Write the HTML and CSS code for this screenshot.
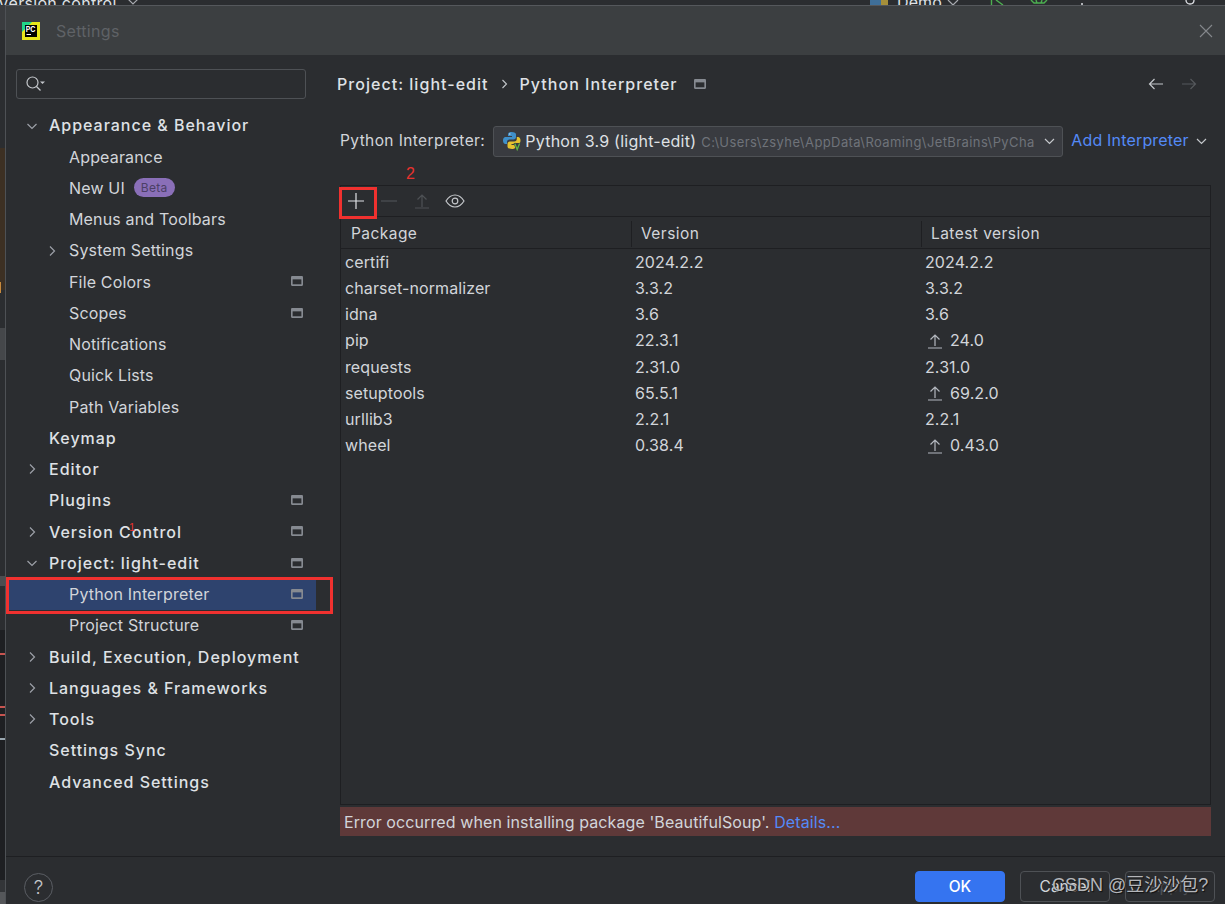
FILE: index.html
```html
<!DOCTYPE html>
<html lang="en">
<head>
<meta charset="utf-8">
<title>Settings</title>
<link rel="stylesheet" href="styles.css">
</head>
<body>
<div class="desktop">
  <div class="bg-top">
    <span class="bg-vc">Version control</span>
    <svg class="bg-chev-vc" width="12" height="8" viewBox="0 0 12 8"><path d="M1 1l5 5 5-5" fill="none" stroke="#a8abb0" stroke-width="1.2"/></svg>
    <svg class="bg-py" width="18" height="5" viewBox="0 0 18 5"><rect width="11" height="5" fill="#3f6f99"/><rect x="11" width="7" height="5" fill="#a58f3a"/></svg>
    <span class="bg-demo">Demo</span>
    <svg class="bg-chev-demo" width="12" height="8" viewBox="0 0 12 8"><path d="M1 1l5 5 5-5" fill="none" stroke="#a8abb0" stroke-width="1.2"/></svg>
    <svg class="bg-play" width="16" height="5" viewBox="0 0 16 5"><path d="M1.500 0v5M6 0l7 5" fill="none" stroke="#4caf50" stroke-width="1.400"/></svg>
    <svg class="bg-bug" width="18" height="5" viewBox="0 0 18 5"><path d="M1 0l3 3h10l3-3M6 0l1 3M12 0l-1 3" fill="none" stroke="#4caf50" stroke-width="1.400"/></svg>
    <i class="bg-dot"></i>
    <svg class="bg-ring" width="10" height="5" viewBox="0 0 10 5"><path d="M1 0c0 3 2 4 4 4s4-1 4-4" fill="none" stroke="#dfe1e5" stroke-width="1.300"/></svg>
  </div>
  <div class="bg-left">
    <i class="s s1"></i><i class="s s2"></i><i class="s s2b"></i><i class="s s3"></i><i class="s s3b"></i><i class="s s4"></i><i class="s s4a"></i><i class="s s4b"></i><i class="s s4c"></i><i class="s s4d"></i><i class="s s5"></i><i class="s s6"></i>
  </div>

  <main class="dialog">
    <header class="titlebar">
      <svg class="logo" width="18" height="18" viewBox="0 0 18 18">
        <rect width="18" height="18" fill="#e8e61a"/>
        <path d="M0 0h10L0 10z" fill="#21d789"/>
        <rect x="3" y="3" width="12" height="12" fill="#000"/>
        <text x="3.800" y="9.500" class="logo-text">PC</text>
        <rect x="4.500" y="12" width="4.500" height="1" fill="#fff"/>
      </svg>
      <span class="title">Settings</span>
      <svg class="close" width="14" height="14" viewBox="0 0 14 14"><path d="M1 1l12 12M13 1L1 13" stroke="#85888c" stroke-width="1.1" fill="none"/></svg>
    </header>

    <div class="content">
      <nav class="sidebar">
        <div class="search">
          <svg width="22" height="18" viewBox="0 0 22 18"><circle cx="7.500" cy="7.500" r="5.500" fill="none" stroke="#c4c7cb" stroke-width="1.2"/><path d="M11.500 11.500l4 4" stroke="#c4c7cb" stroke-width="1.2"/><path d="M15 6.500h5l-2.500 2.500z" fill="#c4c7cb"/></svg>
        </div>
        <ul class="tree">
          <li class="row top"><svg class="arrow" viewBox="0 0 12 12"><path d="M1.500 4l4.500 4.500L10.500 4"/></svg>Appearance &amp; Behavior</li>
          <li class="row sub">Appearance</li>
          <li class="row sub">New UI<span class="beta">Beta</span></li>
          <li class="row sub">Menus and Toolbars</li>
          <li class="row sub"><svg class="arrow" viewBox="0 0 12 12"><path d="M4 1.500l4.500 4.500L4 10.500"/></svg>System Settings</li>
          <li class="row sub">File Colors<svg class="pin" viewBox="0 0 11 9"><rect width="11" height="9" rx="1"/><rect class="pin-in" x="1.500" y="3" width="8" height="4.500"/></svg></li>
          <li class="row sub">Scopes<svg class="pin" viewBox="0 0 11 9"><rect width="11" height="9" rx="1"/><rect class="pin-in" x="1.500" y="3" width="8" height="4.500"/></svg></li>
          <li class="row sub">Notifications</li>
          <li class="row sub">Quick Lists</li>
          <li class="row sub">Path Variables</li>
          <li class="row top">Keymap</li>
          <li class="row top"><svg class="arrow" viewBox="0 0 12 12"><path d="M4 1.500l4.500 4.500L4 10.500"/></svg>Editor</li>
          <li class="row top">Plugins<svg class="pin" viewBox="0 0 11 9"><rect width="11" height="9" rx="1"/><rect class="pin-in" x="1.500" y="3" width="8" height="4.500"/></svg></li>
          <li class="row top"><svg class="arrow" viewBox="0 0 12 12"><path d="M4 1.500l4.500 4.500L4 10.500"/></svg>Version Control<svg class="pin" viewBox="0 0 11 9"><rect width="11" height="9" rx="1"/><rect class="pin-in" x="1.500" y="3" width="8" height="4.500"/></svg></li>
          <li class="row top"><svg class="arrow" viewBox="0 0 12 12"><path d="M1.500 4l4.500 4.500L10.500 4"/></svg>Project: light-edit<svg class="pin" viewBox="0 0 11 9"><rect width="11" height="9" rx="1"/><rect class="pin-in" x="1.500" y="3" width="8" height="4.500"/></svg></li>
          <li class="row sub selected">Python Interpreter<svg class="pin" viewBox="0 0 11 9"><rect width="11" height="9" rx="1"/><rect class="pin-in sel" x="1.500" y="3" width="8" height="4.500"/></svg></li>
          <li class="row sub">Project Structure<svg class="pin" viewBox="0 0 11 9"><rect width="11" height="9" rx="1"/><rect class="pin-in" x="1.500" y="3" width="8" height="4.500"/></svg></li>
          <li class="row top"><svg class="arrow" viewBox="0 0 12 12"><path d="M4 1.500l4.500 4.500L4 10.500"/></svg>Build, Execution, Deployment</li>
          <li class="row top"><svg class="arrow" viewBox="0 0 12 12"><path d="M4 1.500l4.500 4.500L4 10.500"/></svg>Languages &amp; Frameworks</li>
          <li class="row top"><svg class="arrow" viewBox="0 0 12 12"><path d="M4 1.500l4.500 4.500L4 10.500"/></svg>Tools</li>
          <li class="row top">Settings Sync</li>
          <li class="row top">Advanced Settings</li>
        </ul>
      </nav>

      <section class="panel">
        <div class="crumbs">
          <span>Project: light-edit</span>
          <svg class="crumb-sep" width="7" height="10" viewBox="0 0 7 10"><path d="M1.500 1l4 4-4 4" fill="none" stroke="#c4c7cb" stroke-width="1.100"/></svg>
          <span>Python Interpreter</span>
          <svg class="pin crumb-pin" viewBox="0 0 11 9"><rect width="11" height="9" rx="1"/><rect class="pin-in" x="1.500" y="3" width="8" height="4.500"/></svg>
          <svg class="nav-arrow" width="16" height="12" viewBox="0 0 16 12"><path d="M15 6H1.500M6.500 1l-5 5 5 5" fill="none" stroke="#c4c7cb" stroke-width="1.200"/></svg>
          <svg class="nav-arrow fwd" width="16" height="12" viewBox="0 0 16 12"><path d="M1 6h13.500M9.500 1l5 5-5 5" fill="none" stroke="#55585c" stroke-width="1.200"/></svg>
        </div>

        <div class="interp">
          <span class="interp-label">Python Interpreter:</span>
          <div class="combo">
            <svg class="py" width="20" height="20" viewBox="0 0 20 20">
              <path d="M9.500 1C6.500 1 6 2.200 6 3.500V5h4v1H3.500C2 6 1 7.300 1 9.500S2 13 3.500 13H5v-2c0-1.500 1-2.500 2.500-2.500h4C13 8.500 14 7.500 14 6V3.500C14 2 12.500 1 9.500 1z" fill="#3f8fc9"/>
              <path d="M10 18c3 0 3.500-1.200 3.500-2.500V14h-4v-1H16c1.500 0 2.500-1.300 2.500-3.500S17.500 6 16 6h-1.200v2c0 1.500-1 2.500-2.500 2.500H8C6.500 10.500 5.500 11.500 5.500 13v2.500C5.500 17 7 18 10 18z" fill="#e5c22f"/>
              <path d="M12.500 12l2.700 7 2.800-7" fill="#393b40" stroke="#393b40" stroke-width="2"/>
              <path d="M12.800 12.500l2.400 6 2.400-6" fill="none" stroke="#62b543" stroke-width="1.300"/>
              <circle cx="7.800" cy="3" r=".7" fill="#dfe1e5"/>
            </svg>
            <span class="combo-name">Python 3.9 (light-edit)</span>
            <span class="combo-path">C:\Users\zsyhe\AppData\Roaming\JetBrains\PyCha</span>
            <svg class="chev" width="11" height="7" viewBox="0 0 11 7"><path d="M1 1l4.500 4.500L10 1" fill="none" stroke="#c4c7cb" stroke-width="1.200"/></svg>
          </div>
          <span class="add">Add Interpreter</span>
          <svg class="chev add-chev" width="11" height="7" viewBox="0 0 11 7"><path d="M1 1l4.500 4.500L10 1" fill="none" stroke="#c4c7cb" stroke-width="1.200"/></svg>
        </div>

        <div class="table">
          <div class="toolbar">
            <svg width="16" height="16" viewBox="0 0 16 16"><path d="M8 0v16M0 8h16" stroke="#dfe1e5" stroke-width="1.200"/></svg>
            <svg width="16" height="16" viewBox="0 0 16 16"><path d="M0 8h16" stroke="#4e5155" stroke-width="1.200"/></svg>
            <svg width="16" height="16" viewBox="0 0 16 16"><path d="M8 14V2M3.500 6.500L8 2l4.500 4.500M1 15h14" fill="none" stroke="#4e5155" stroke-width="1.200"/></svg>
            <svg width="20" height="14" viewBox="0 0 20 14"><path d="M1 7c2.500-4 5.500-6 9-6s6.500 2 9 6c-2.500 4-5.500 6-9 6s-6.500-2-9-6z" fill="none" stroke="#c4c7cb" stroke-width="1.200"/><circle cx="10" cy="7" r="2.800" fill="none" stroke="#c4c7cb" stroke-width="1.200"/></svg>
          </div>
          <div class="thead">
            <span class="th">Package</span><span class="th">Version</span><span class="th">Latest version</span>
          </div>
          <div class="tbody">
            <div class="tr"><span>certifi</span><span>2024.2.2</span><span>2024.2.2</span></div>
            <div class="tr"><span>charset-normalizer</span><span>3.3.2</span><span>3.3.2</span></div>
            <div class="tr"><span>idna</span><span>3.6</span><span>3.6</span></div>
            <div class="tr"><span>pip</span><span>22.3.1</span><span class="up"><svg width="16" height="16" viewBox="0 0 16 16"><path d="M8 13V2M3.500 6.500L8 2l4.500 4.500M1 15h14" fill="none" stroke="#b4b8bf" stroke-width="1.200"/></svg>24.0</span></div>
            <div class="tr"><span>requests</span><span>2.31.0</span><span>2.31.0</span></div>
            <div class="tr"><span>setuptools</span><span>65.5.1</span><span class="up"><svg width="16" height="16" viewBox="0 0 16 16"><path d="M8 13V2M3.500 6.500L8 2l4.500 4.500M1 15h14" fill="none" stroke="#b4b8bf" stroke-width="1.200"/></svg>69.2.0</span></div>
            <div class="tr"><span>urllib3</span><span>2.2.1</span><span>2.2.1</span></div>
            <div class="tr"><span>wheel</span><span>0.38.4</span><span class="up"><svg width="16" height="16" viewBox="0 0 16 16"><path d="M8 13V2M3.500 6.500L8 2l4.500 4.500M1 15h14" fill="none" stroke="#b4b8bf" stroke-width="1.200"/></svg>0.43.0</span></div>
          </div>
        </div>
        <div class="error">Error occurred when installing package 'BeautifulSoup'. <a class="details">Details...</a></div>
      </section>
    </div>

    <footer class="footer">
      <span class="help">?</span>
      <div class="buttons">
        <span class="btn ok">OK</span>
        <span class="btn">Cancel</span>
        <span class="btn apply">Apply</span>
      </div>
    </footer>
  </main>

  <div class="mark mark-side"></div>
  <div class="mark mark-plus"></div>
  <span class="note note1">1</span>
  <span class="note note2">2</span>
  <span class="watermark">CSDN @豆沙沙包?</span>
</div>
</body>
</html>
```
FILE: styles.css
```css
* { box-sizing: border-box; }
html, body { margin: 0; padding: 0; }
body { background: #2b2d30; font-family: Inter, "Liberation Sans", sans-serif; color: #dfe1e5; overflow: hidden; }
ul { list-style: none; margin: 0; padding: 0; }
.desktop { position: relative; width: 1225px; height: 904px; overflow: hidden; }

.bg-top { position: absolute; left: 0; top: 0; width: 100%; height: 5px; background: #2b2d30; overflow: hidden; }
.bg-top svg, .bg-dot { position: absolute; top: 0; }
.bg-vc { position: absolute; left: -2px; top: -7px; font-size: 16px; color: #dfe1e5; letter-spacing: .3px; white-space: nowrap; }
.bg-top .bg-chev-vc { left: 127px; top: -2px; }
.bg-py { left: 870px; }
.bg-demo { position: absolute; left: 897px; top: -8px; font-size: 16px; letter-spacing: .1px; }
.bg-top .bg-chev-demo { left: 947px; top: -1px; }
.bg-play { left: 990px; }
.bg-bug { left: 1030px; }
.bg-top .bg-dot { left: 1081px; top: 3px; width: 2px; height: 2px; border-radius: 50%; background: #dfe1e5; }
.bg-ring { left: 1185px; }

.bg-left { position: absolute; left: 0; top: 5px; width: 5px; height: 899px; background: #2b2d30; }
.s { position: absolute; left: 0; width: 5px; display: block; }
.s1 { top: 0; height: 25px; background: #3a3c3f; }
.s2 { top: 143px; height: 142px; background: #3d3023; }
.s2b { top: 277px; height: 11px; width: 1px; background: #c98a3c; }
.s3 { top: 323px; height: 32px; background: #45474a; }
.s3b { top: 571px; height: 10px; background: #4b4d50; }
.s4 { top: 625px; height: 250px; background: #1e1f22; }
.s4a { top: 648px; height: 2px; background: #c75450; }
.s4b { top: 701px; height: 2px; background: #c75450; }
.s4c { top: 709px; height: 2px; background: #c75450; }
.s4d { top: 733px; height: 2px; background: #9aa7b0; }
.s5 { top: 875px; height: 12px; background: #333538; }
.s6 { top: 887px; height: 12px; background: #55575a; }

.dialog { position: absolute; left: 5px; top: 5px; width: 1220px; height: 899px; background: #2b2d30; display: flex; flex-direction: column; border-left: 1px solid #4e5155; border-top: 1px solid #55585c; }
.titlebar { height: 49px; flex: none; background: #3c3f41; display: flex; align-items: center; padding: 0 12px 0 16px; }
.logo { flex: none; }
.logo-text { font-size: 7px; font-weight: 700; fill: #fff; font-family: Inter, sans-serif; }
.title { margin-left: 16px; font-size: 16px; color: #5f6266; letter-spacing: .3px; }
.close { margin-left: auto; }

.content { flex: 1; display: flex; min-height: 0; }
.sidebar { width: 324px; flex: none; padding: 14px 0 0 0; }
.search { margin-left: 10px; width: 290px; height: 30px; border: 1px solid #4e5155; border-radius: 3px; display: flex; align-items: center; padding-left: 8px; }
.tree { margin-top: 10.700px; }
.row { position: relative; height: 31.250px; display: flex; align-items: center; font-size: 16px; color: #dfe1e5; white-space: nowrap; margin-right: 8px; }
.top { padding-left: 43px; font-weight: 500; letter-spacing: .98px; }
.sub { padding-left: 63px; letter-spacing: .16px; color: #d2d5da; }
.selected { background: #2e436e; margin-left: 3px; margin-right: 14px; padding-left: 60px; }
.arrow { position: absolute; left: 20px; top: 10px; width: 12px; height: 12px; fill: none; stroke: #9da0a8; stroke-width: 1.200; }
.sub .arrow { left: 40px; }
.beta { margin-left: 9px; height: 19px; padding: 0 7px; border-radius: 10px; background: #8a6fb8; color: #4c3f66; font-size: 12px; line-height: 19px; letter-spacing: .3px; }
.pin { width: 12px; height: 10px; fill: #868a91; flex: none; }
.row .pin { position: absolute; right: 19px; top: 10.500px; }
.row.selected .pin { right: 13px; }
.pin-in { fill: #2b2d30; }
.pin-in.sel { fill: #2e436e; }

.panel { flex: 1; min-width: 0; padding: 0 14px 0 7px; position: relative; }
.crumbs { display: flex; align-items: center; height: 30px; margin-top: 14px; font-size: 16px; font-weight: 500; letter-spacing: 1.030px; }
.crumbs span { white-space: nowrap; }
.crumb-sep { margin: 0 12px; }
.crumb-pin { margin-left: 16px; }
.nav-arrow { margin-left: auto; }
.nav-arrow.fwd { margin-left: 17px; margin-right: 14px; }
.interp { display: flex; align-items: center; height: 32px; margin-top: 26px; padding-left: 3px; }
.interp-label { font-size: 15.500px; letter-spacing: .4px; color: #d2d5da; white-space: nowrap; margin-top: -2px; }
.combo { margin-left: 8px; width: 570px; height: 31px; flex: none; background: #393b40; border: 1px solid #4e5155; border-radius: 3px; display: flex; align-items: center; padding-left: 8px; overflow: hidden; }
.py { flex: none; }
.combo-name { margin-left: 3px; font-size: 16px; letter-spacing: .25px; white-space: nowrap; color: #dfe1e5; }
.combo-path { margin-left: 5px; font-size: 13px; color: #6f737a; white-space: nowrap; letter-spacing: .4px; width: 334px; overflow: hidden; flex: none; margin-top: 2px; }
.chev { flex: none; }
.combo .chev { margin-left: 9px; }
.add { margin-left: 8px; font-size: 16px; color: #548af7; white-space: nowrap; letter-spacing: .18px; margin-top: -2px; }
.add-chev { margin-left: 7px; }

.table { margin-top: 28px; margin-left: 3px; width: 871px; height: 620px; border: 1px solid #1e1f22; display: flex; flex-direction: column; }
.toolbar { height: 31px; flex: none; border-bottom: 1px solid #1e1f22; display: flex; align-items: center; padding-left: 7px; gap: 17px; }
.toolbar svg:last-child { margin-left: -2px; }
.thead { height: 32px; flex: none; border-bottom: 1px solid #1e1f22; display: grid; grid-template-columns: 290px 290px 1fr; align-items: center; }
.th { font-size: 15.500px; padding-left: 9px; height: 26px; margin-top: 2px; line-height: 26px; letter-spacing: .45px; color: #d2d5da; border-left: 1px solid #1e1f22; }
.th:first-child { border-left: 0; padding-left: 10px; }
.tr { height: 26.150px; display: grid; grid-template-columns: 290px 290px 1fr; align-items: center; font-size: 16px; letter-spacing: .1px; color: #d2d5da; padding-left: 4px; }
.tr span { display: flex; align-items: center; }
.up svg { margin-left: 2px; margin-right: 7px; margin-top: 1px; }
.error { margin-top: 2px; margin-left: 3px; width: 871px; height: 29px; background: #5f3939; font-size: 16px; letter-spacing: .1px; line-height: 31px; padding-left: 4px; color: #d2d5da; }
.details { color: #548af7; }

.footer { height: 48px; flex: none; border-top: 1px solid #1e1f22; display: flex; align-items: flex-start; position: relative; }
.help { margin: 16px 0 0 18px; width: 29px; height: 29px; border: 1px solid #5a5d63; border-radius: 50%; display: flex; align-items: center; justify-content: center; font-size: 19px; font-weight: 300; color: #c4c7cb; flex: none; }
.buttons { margin-left: auto; margin-right: 10px; margin-top: 14px; display: flex; gap: 15px; }
.btn { width: 90px; height: 31px; border: 1px solid #4e5155; border-radius: 4px; display: flex; align-items: center; justify-content: center; font-size: 15.500px; color: #d2d5da; }
.ok { background: #3574f0; border-color: #3574f0; color: #fff; font-weight: 500; }
.apply { color: #4e5155; }

.mark { position: absolute; border: 3px solid #f0312f; }
.mark-side { left: 6px; top: 577px; width: 327px; height: 37px; }
.mark-plus { left: 339px; top: 187px; width: 38px; height: 32px; }
.note { position: absolute; color: #e8322e; font-family: "Liberation Sans", sans-serif; }
.note1 { left: 129px; top: 521px; font-size: 11px; }
.note2 { left: 406px; top: 165px; font-size: 16px; }
.watermark { position: absolute; left: 1052px; top: 870px; font-family: "Liberation Sans", "Noto Sans CJK SC", sans-serif; font-size: 18px; color: #b4b6ba; text-shadow: 1px 1px 1px #111; white-space: nowrap; }
```
